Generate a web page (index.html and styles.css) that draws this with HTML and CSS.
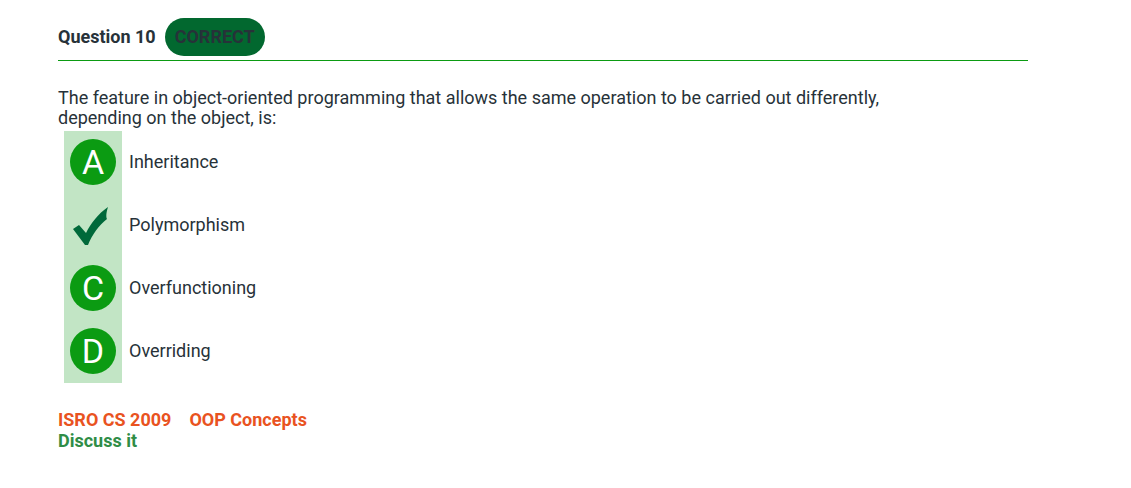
FILE: index.html
```html
<!DOCTYPE html>
<html>
<head>
<meta charset="utf-8">
<link rel="stylesheet" href="styles.css">
</head>
<body>
<div class="question">
  <div class="header">
    <span class="qnum">Question 10</span>
    <span class="badge">CORRECT</span>
  </div>
  <p class="qtext">The feature in object-oriented programming that allows the same operation to be carried out differently, depending on the object, is:</p>
  <div class="options">
    <div class="option">
      <div class="mark"><span class="circle">A</span></div>
      <span class="label">Inheritance</span>
    </div>
    <div class="option">
      <div class="mark">
        <svg class="check" width="36" height="38" viewBox="0 0 36 38"><path d="M0 22 L6 18 L13 26 C18 16 25 7 35 0 C33 6 33 10 34 12 C26 18 19 28 15 38 L12 38 Z" fill="#00693a"/></svg>
      </div>
      <span class="label">Polymorphism</span>
    </div>
    <div class="option">
      <div class="mark"><span class="circle">C</span></div>
      <span class="label">Overfunctioning</span>
    </div>
    <div class="option">
      <div class="mark"><span class="circle">D</span></div>
      <span class="label">Overriding</span>
    </div>
  </div>
  <div class="tags">
    <a class="tag">ISRO CS 2009</a>
    <a class="tag">OOP Concepts</a>
  </div>
  <a class="discuss">Discuss it</a>
</div>
</body>
</html>
```
FILE: styles.css
```css
* { box-sizing: border-box; }
body {
  margin: 0;
  background: #fff;
  font-family: Roboto, "Liberation Sans", sans-serif;
  color: #273239;
}
.question {
  width: 970px;
  margin-left: 58px;
  padding-top: 18px;
}
.header {
  display: flex;
  align-items: center;
  gap: 9px;
  padding-bottom: 4px;
  border-bottom: 1px solid #0b9b12;
}
.qnum {
  font-weight: 700;
  font-size: 18px;
  margin-top: -2px;
}
.badge {
  display: inline-flex;
  align-items: center;
  justify-content: center;
  width: 100px;
  height: 38px;
  padding-bottom: 2px;
  border-radius: 19px;
  background: #02682f;
  color: #273239;
  font-weight: 700;
  font-size: 18px;
}
.qtext {
  margin: 27px 0 0;
  width: 840px;
  font-size: 18px;
  line-height: 20px;
}
.options {
  display: flex;
  flex-direction: column;
  margin-top: 3px;
  margin-left: 6px;
}
.option {
  display: flex;
  align-items: center;
  height: 63px;
  gap: 7px;
}
.mark {
  width: 58px;
  height: 63px;
  background: #c2e5c5;
  display: flex;
  align-items: center;
  justify-content: center;
}
.circle {
  width: 46px;
  height: 46px;
  border-radius: 50%;
  background: #0b9b12;
  color: #fff;
  font-size: 34px;
  display: flex;
  align-items: center;
  justify-content: center;
  line-height: 1;
  margin-top: -2px;
}
.check { margin-left: -4px; }
.label {
  font-size: 18px;
  color: #273239;
  margin-top: -3px;
}
.tags {
  display: flex;
  gap: 18px;
  margin-top: 26px;
}
.tag {
  color: #e9531f;
  font-weight: 700;
  font-size: 18px;
  line-height: 21px;
}
.discuss {
  display: block;
  color: #2f8d46;
  font-weight: 700;
  font-size: 18px;
  line-height: 21px;
}
```
